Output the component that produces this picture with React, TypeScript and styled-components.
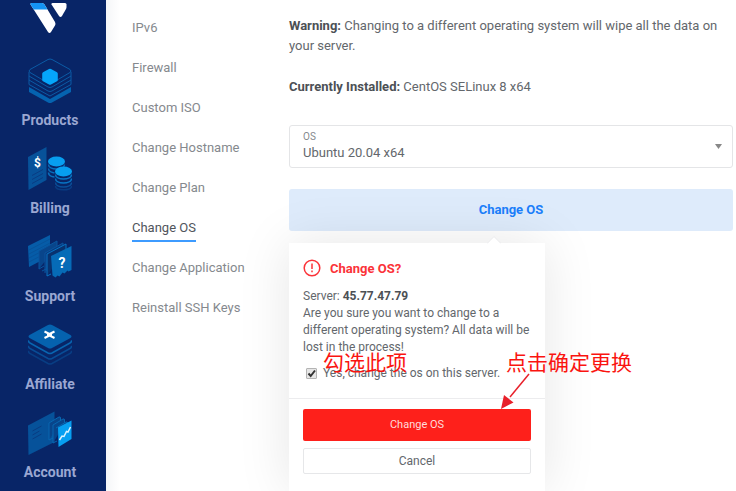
import React from "react";
import styled, { createGlobalStyle } from "styled-components";

const GlobalStyle = createGlobalStyle`
  * { box-sizing: border-box; }
  body {
    margin: 0;
    background: #fff;
    color: #63676c;
    font-family: Roboto, "Liberation Sans", sans-serif;
    font-size: 13px;
    line-height: 20px;
  }
  button, select, input { font: inherit; color: inherit; margin: 0; }
`;

const Page = styled.div`
  display: flex;
  min-height: 100vh;
`;

const Sidebar = styled.aside`
  flex: 0 0 106px;
  display: flex;
  flex-direction: column;
  align-items: center;
  gap: 24px;
  padding-top: 2px;
  background: #082567;
`;

const Logo = styled.a`
  display: flex;
  height: 32px;
`;

const MainNav = styled.nav`
  display: flex;
  flex-direction: column;
  gap: 16px;
  align-self: stretch;
`;

const MainLink = styled.a`
  display: flex;
  flex-direction: column;
  align-items: center;
  gap: 6px;
  padding-right: 6px;
  color: #9aa7d2;
  font-size: 14px;
  font-weight: 700;
  text-decoration: none;
`;

const Main = styled.main`
  flex: 1;
  min-width: 0;
  display: flex;
  gap: 32px;
  padding: 16px 3px 0 26px;
  background: linear-gradient(to right, #f5f6f8, #fff 14px);
`;

const SubNav = styled.nav`
  flex: 0 0 125px;
  display: flex;
  flex-direction: column;
  align-items: flex-start;
  gap: 14px;
`;

const SubLink = styled.a<{ $active?: boolean }>`
  height: 26px;
  line-height: 24px;
  color: ${(p) => (p.$active ? "#50555c" : "#85898e")};
  border-bottom: 2px solid ${(p) => (p.$active ? "#3d9bff" : "transparent")};
  text-decoration: none;
  white-space: nowrap;
`;

const Content = styled.section`
  flex: 1;
  min-width: 0;
`;

const Paragraph = styled.p`
  margin: 0 0 21px;
`;

const Strong = styled.strong`
  font-weight: 700;
  color: #4c5055;
`;

const Field = styled.div`
  display: grid;
  grid-template-columns: 1fr;
  align-items: center;
  height: 43px;
  margin-top: 28px;
  border: 1px solid #e4e5e7;
  border-radius: 3px;
  background: #fff;

  & > * { grid-area: 1 / 1; }
`;

const FieldLabel = styled.label`
  align-self: start;
  padding: 5px 13px 0;
  color: #85898e;
  font-size: 10px;
  line-height: 12px;
  pointer-events: none;
`;

const Select = styled.select`
  width: 100%;
  height: 41px;
  padding: 13px 24px 0 13px;
  border: 0;
  background: transparent;
  appearance: none;
`;

const Caret = styled.svg`
  justify-self: end;
  margin-right: 10px;
  pointer-events: none;
`;

const Action = styled.div`
  position: relative;
  margin-top: 21px;
`;

const OpenButton = styled.button`
  display: block;
  width: 100%;
  height: 42px;
  border: 0;
  border-radius: 3px;
  background: #deebfb;
  color: #1b7ffb;
  font-weight: 700;
`;

const Popover = styled.div`
  position: absolute;
  top: 54px;
  left: 0;
  width: 256px;
  background: #fff;
  box-shadow: 0 0 50px rgba(0, 0, 0, 0.1);
`;

const Pointer = styled.svg`
  position: absolute;
  top: -7px;
  left: 198px;
`;

const PopoverBody = styled.div`
  padding: 15px 14px 16px;
  font-size: 12px;
  line-height: 17px;
`;

const Title = styled.h2`
  display: flex;
  align-items: center;
  gap: 9px;
  height: 20px;
  margin: 0 0 10px;
  color: #fb3339;
  font-size: 13px;
  font-weight: 700;
`;

const Message = styled.p`
  margin: 0;
`;

const CheckRow = styled.label`
  display: flex;
  align-items: center;
  gap: 6px;
  padding: 9px 0 0 3px;
`;

const CheckBox = styled.input`
  appearance: none;
  width: 11px;
  height: 11px;
  border: 1px solid #b4b4b4;
  border-radius: 1px;
  background: #e6e6e6;

  &:checked {
    background: #e6e6e6
      url("data:image/svg+xml,%3Csvg xmlns='http://www.w3.org/2000/svg' viewBox='0 0 9 9'%3E%3Cpath d='M1.5 4.5l2.2 2.5L8 1.5' fill='none' stroke='%23333' stroke-width='2'/%3E%3C/svg%3E")
      center / 9px 9px no-repeat;
  }
`;

const PopoverFooter = styled.div`
  display: flex;
  flex-direction: column;
  gap: 7px;
  padding: 10px 14px 17px;
  border-top: 1px solid #ececee;
`;

const ConfirmButton = styled.button`
  height: 32px;
  border: 0;
  border-radius: 2px;
  background: #fe201b;
  color: #ffdcdb;
  font-size: 11px;
`;

const CancelButton = styled.button`
  height: 26px;
  border: 1px solid #e6e7e9;
  border-radius: 2px;
  background: #fff;
  font-size: 12px;
`;

const Note = styled.span<{ $left: number }>`
  position: absolute;
  top: 104px;
  left: ${(p) => p.$left}px;
  color: #fa1410;
  font-family: "Noto Sans CJK SC", serif;
  font-size: 21px;
  font-weight: 400;
  line-height: 28px;
  white-space: nowrap;
  pointer-events: none;
`;

const Arrow = styled.svg`
  position: absolute;
  top: 129px;
  left: 211px;
  pointer-events: none;
`;

const IconSvg = ({ children }: { children: React.ReactNode }) => (
  <svg width="44" height="46" viewBox="0 0 44 46" fill="none" aria-hidden="true">
    {children}
  </svg>
);

const ProductsIcon = () => (
  <IconSvg>
    <path d="M1 29 22 41 43 29v5L24 44.5q-2 1-4 0L1 34z" fill="#0563b0" />
    <g stroke="#0b5ba6" strokeWidth="1">
      <path d="M1 14v12.500L22 38 43 26.500V14" />
      <path d="M1 18 20 29q2 1 4 0l19-11" />
      <path d="M1 22 20 33q2 1 4 0l19-11" />
      <path d="M20 1.500q2-1 4 0L42 11.500q2 1.500 0 3L24 25q-2 1-4 0L2 14.500q-2-1.500 0-3z" />
    </g>
    <path d="M21 11q1-.6 2 0l6 3.200q.8.500.8 1.500v6q0 1-.8 1.500l-6 3.200q-1 .6-2 0l-6-3.200q-.8-.5-.8-1.500v-6q0-1 .8-1.500z" fill="#05a6fb" />
  </IconSvg>
);

const BillingIcon = () => (
  <IconSvg>
    <path d="M0 11 18.500 1v33L.5 44z" fill="#07529a" />
    <path d="M4 29.500l11-6M4 33.500l11-6M4 37.500l11-6" stroke="#093c83" />
    <text x="9.500" y="21" textAnchor="middle" fill="#fff" fontSize="12" fontWeight="700">$</text>
    <g stroke="#0870be" strokeWidth="1.500">
      <path d="M20.500 18.500c0 6 16 6 16 0M20.500 22.500c0 6 16 6 16 0M20.500 26.500c0 4 5 5 9 4" />
    </g>
    <ellipse cx="28.500" cy="15.500" rx="8.500" ry="5" fill="#079eef" />
    <path d="M26.500 25h18v15q-9 6-18 0z" fill="#082567" />
    <g stroke="#0875c5" strokeWidth="1.500">
      <path d="M27.500 28.500c0 6 16 6 16 0M27.500 32.500c0 6 16 6 16 0" />
      <path d="M27.500 36.500c0 6 16 6 16 0" stroke="#0a4f99" />
      <path d="M27.500 40c0 5 16 5 16 0" stroke="#093b82" />
    </g>
    <ellipse cx="35.500" cy="25.500" rx="8.500" ry="5" fill="#079eef" />
  </IconSvg>
);

const SupportIcon = () => (
  <IconSvg>
    <path d="M0 12 22 1v21L1 33z" fill="#065ca8" />
    <path d="M1 16 22 5M1 20 22 9M1 24l21-11M1 28l21-11" stroke="#07539b" />
    <g stroke="#0a559f">
      <path d="M11 35V17l18-10v5" fill="#08458b" />
      <path d="M17 39V19l18-10v6" fill="#083b80" />
      <path d="M14 37l4-2M11 35l5-3" />
    </g>
    <path d="M19 42V20l19-10v5M19 42l4-2" stroke="#0873c2" fill="#08326f" />
    <path d="M23 22 43.500 12v24l-3 1.500-1-1-3 3-2-1-3 4-2-1-2 2-3-2z" fill="#066bb7" />
    <text x="34" y="34" textAnchor="middle" fill="#fff" fontSize="14" fontWeight="700">?</text>
  </IconSvg>
);

const AffiliateIcon = () => (
  <IconSvg>
    <g strokeWidth="1.500">
      <path d="M1 29q-1 1.500 1 2.500l18 10q2 1 4 0l18-10q2-1 1-2.500" stroke="#083d83" />
      <path d="M1 24q-1 1.500 1 2.500l18 10q2 1 4 0l18-10q2-1 1-2.500" stroke="#084c95" />
      <path d="M1 18.500q-1 1.500 1 2.500l18 10q2 1 4 0l18-10q2-1 1-2.500" stroke="#0865b0" />
    </g>
    <path d="M20 3q2-1 4 0l18.500 10q2 1.500 0 3L24 26q-2 1-4 0L1.500 16q-2-1.500 0-3z" fill="#0562ae" />
    <path d="M16.500 9.500l4 2q1 .5 2 0l4-2M16.500 16l4-2q1-.5 2 0l4 2M19 12.700h5" stroke="#fff" strokeWidth="2" />
  </IconSvg>
);

const AccountIcon = () => (
  <IconSvg>
    <path d="M0 15.500 26.500 1.500V32L.5 45z" fill="#06529a" />
    <path d="M4.500 21l9-5M4.500 25l7-4M4.500 29l9-5" stroke="#083c82" />
    <g stroke="#0867b1" fill="#08458b">
      <path d="M21 30V13l10-6q1.500-.5 1.500 1v4" />
      <path d="M25 33V15l10-6q1.500-.5 1.500 1v4M21 30l4-2M25 33l4-2" />
      <path d="M28 18l10-6q1.500-.5 1.500 1v4" />
    </g>
    <path d="M30 17.500 43.500 10.500V29L30.500 37z" fill="#079ff1" />
    <path d="M31.500 30l2.500-4 2 .5 2.500-5 1.500.5 2.500-5" stroke="#d9f1ff" strokeWidth="1.500" />
  </IconSvg>
);

const mainItems = [
  { label: "Products", Icon: ProductsIcon },
  { label: "Billing", Icon: BillingIcon },
  { label: "Support", Icon: SupportIcon },
  { label: "Affiliate", Icon: AffiliateIcon },
  { label: "Account", Icon: AccountIcon },
];

const subItems = [
  "IPv6",
  "Firewall",
  "Custom ISO",
  "Change Hostname",
  "Change Plan",
  "Change OS",
  "Change Application",
  "Reinstall SSH Keys",
];

export default function App() {
  return (
    <>
      <GlobalStyle />
      <Page>
        <Sidebar>
          <Logo href="#" aria-label="Home">
            <svg width="46" height="32" viewBox="0 0 46 32" aria-hidden="true">
              <path d="M1.500 1H12q1.500 0 2.500 1.500L25 20q1 2 0 3.500l-4 6.500q-1.500 2-3 0L.5 2.500Q0 1 1.500 1z" fill="#fff" />
              <path d="M1.500 1H12q1.500 0 2.500 1.500L17.500 7.500H3.700L.5 2.500Q0 1 1.500 1z" fill="#1494f5" />
              <path d="M22.500 1h12.500q1.500 0 1.500 1.500V5q0 1-.5 2l-4 7q-1.500 2-3 0L21.500 2.500Q21 1 22.500 1z" fill="#fff" />
            </svg>
          </Logo>
          <MainNav>
            {mainItems.map(({ label, Icon }) => (
              <MainLink key={label} href="#">
                <Icon />
                {label}
              </MainLink>
            ))}
          </MainNav>
        </Sidebar>
        <Main>
          <SubNav>
            {subItems.map((item) => (
              <SubLink key={item} href="#" $active={item === "Change OS"}>
                {item}
              </SubLink>
            ))}
          </SubNav>
          <Content>
            <Paragraph>
              <Strong>Warning:</Strong> Changing to a different operating system will wipe all the data on your server.
            </Paragraph>
            <Paragraph>
              <Strong>Currently Installed:</Strong> CentOS SELinux 8 x64
            </Paragraph>
            <Field>
              <FieldLabel htmlFor="os">OS</FieldLabel>
              <Select id="os" defaultValue="ubuntu">
                <option value="ubuntu">Ubuntu 20.04 x64</option>
              </Select>
              <Caret width="7" height="5" viewBox="0 0 7 5" aria-hidden="true">
                <path d="M0 0h7L3.500 5z" fill="#888" />
              </Caret>
            </Field>
            <Action>
              <OpenButton type="button">Change OS</OpenButton>
              <Popover role="dialog" aria-labelledby="confirm-title">
                <Pointer width="14" height="8" viewBox="0 0 14 8" aria-hidden="true">
                  <path d="M0 8 7 1l7 7z" fill="#fff" />
                  <path d="M0 7.500 7 .5l7 7" fill="none" stroke="#ececee" />
                </Pointer>
                <PopoverBody>
                  <Title id="confirm-title">
                    <svg width="18" height="18" viewBox="0 0 18 18" fill="none" stroke="#fb3339" strokeWidth="1.500" aria-hidden="true">
                      <circle cx="9" cy="9" r="7.800" />
                      <path d="M9 4.500v5.500M9 11.500v1.800" />
                    </svg>
                    Change OS?
                  </Title>
                  <Message>
                    Server: <Strong>45.77.47.79</Strong>
                  </Message>
                  <Message>
                    Are you sure you want to change to a different operating system? All data will be lost in the process!
                  </Message>
                  <CheckRow>
                    <CheckBox type="checkbox" defaultChecked />
                    Yes, change the os on this server.
                  </CheckRow>
                </PopoverBody>
                <PopoverFooter>
                  <ConfirmButton type="button">Change OS</ConfirmButton>
                  <CancelButton type="button">Cancel</CancelButton>
                </PopoverFooter>
                <Note $left={34}>勾选此项</Note>
                <Note $left={217}>点击确定更换</Note>
                <Arrow width="32" height="38" viewBox="0 0 32 38" aria-hidden="true">
                  <path d="M29 2 10 25" stroke="#e8202a" strokeWidth="1.500" />
                  <path d="M1 37 4 23 13.500 30.500z" fill="#e8202a" />
                </Arrow>
              </Popover>
            </Action>
          </Content>
        </Main>
      </Page>
    </>
  );
}
